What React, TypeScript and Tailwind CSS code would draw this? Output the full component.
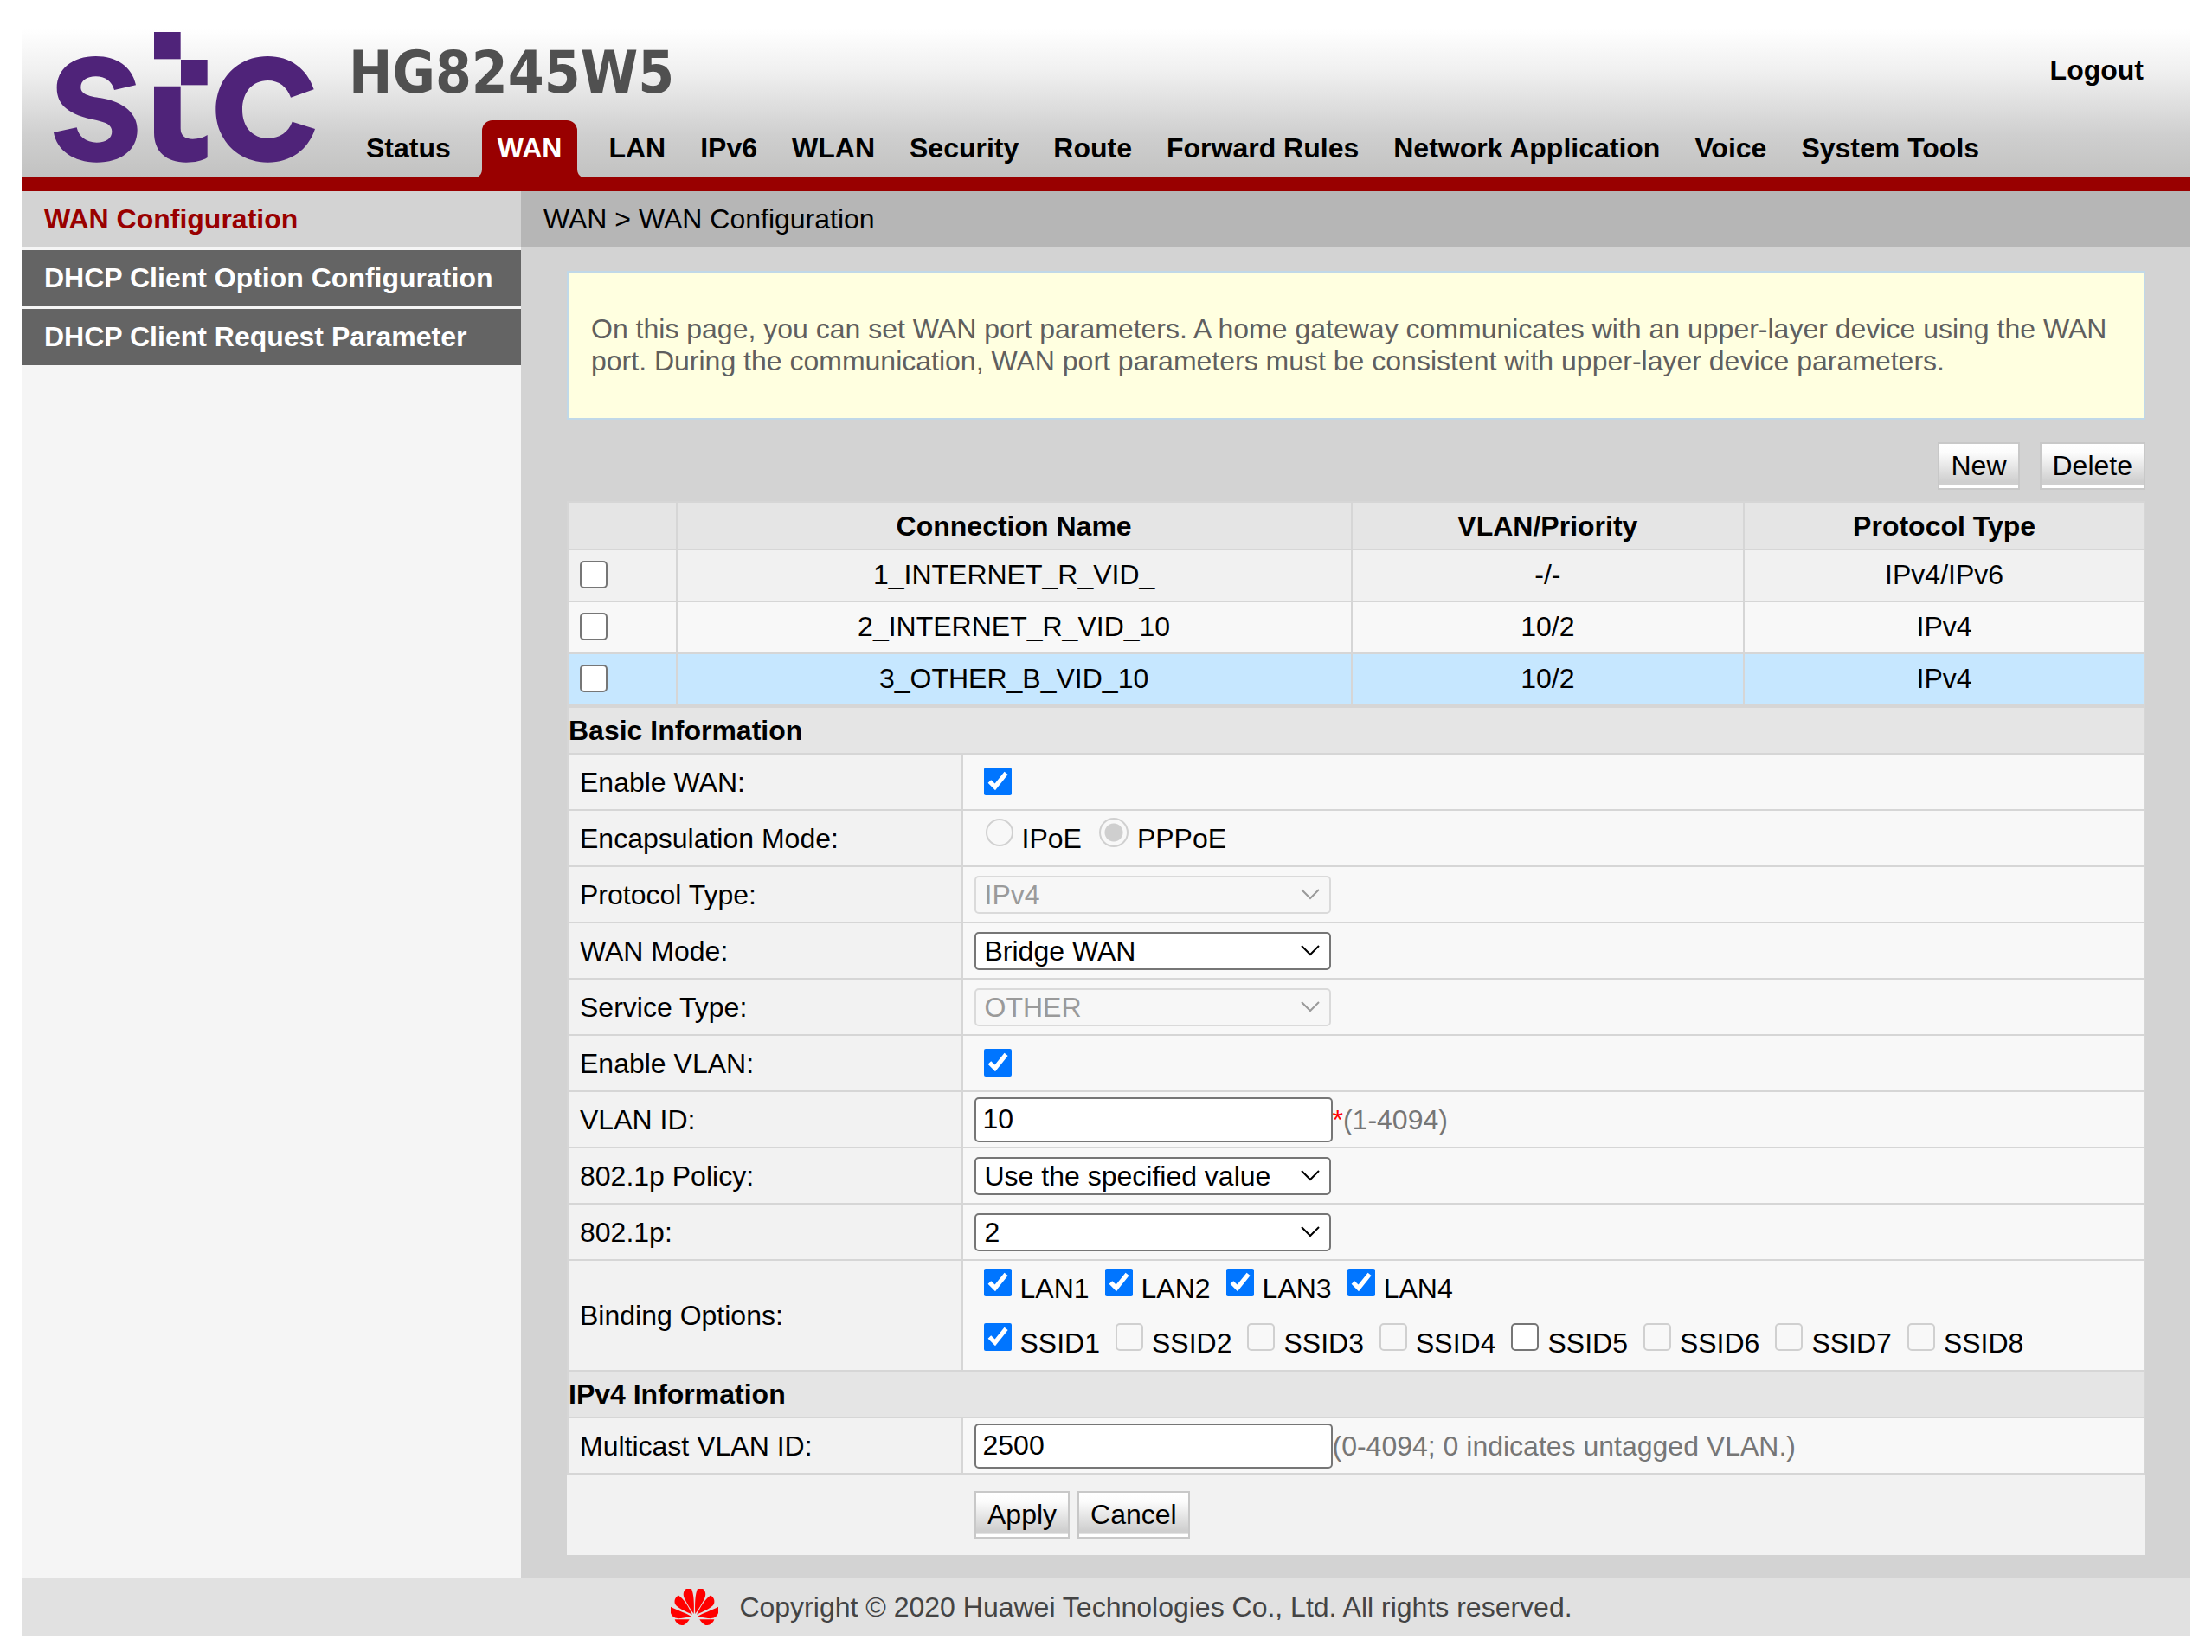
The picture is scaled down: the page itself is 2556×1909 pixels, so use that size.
import React from 'react';

const navItems = [
  'Status',
  'WAN',
  'LAN',
  'IPv6',
  'WLAN',
  'Security',
  'Route',
  'Forward Rules',
  'Network Application',
  'Voice',
  'System Tools'
];

const sideItems = ['WAN Configuration', 'DHCP Client Option Configuration', 'DHCP Client Request Parameter'];

const connections = [
  { name: '1_INTERNET_R_VID_', vlan: '-/-', protocol: 'IPv4/IPv6', color: 'bg-[#f1f1f1]' },
  { name: '2_INTERNET_R_VID_10', vlan: '10/2', protocol: 'IPv4', color: 'bg-[#f8f8f8]' },
  { name: '3_OTHER_B_VID_10', vlan: '10/2', protocol: 'IPv4', color: 'bg-[#c6e7ff]' }
];

const lanPorts = ['LAN1', 'LAN2', 'LAN3', 'LAN4'];

const ssids = [
  { name: 'SSID1', checked: true, disabled: false },
  { name: 'SSID2', checked: false, disabled: true },
  { name: 'SSID3', checked: false, disabled: true },
  { name: 'SSID4', checked: false, disabled: true },
  { name: 'SSID5', checked: false, disabled: false },
  { name: 'SSID6', checked: false, disabled: true },
  { name: 'SSID7', checked: false, disabled: true },
  { name: 'SSID8', checked: false, disabled: true }
];

// shared look of the tick boxes and radios; ticked boxes fall back to the native drawing
const checkboxStyle =
  'block size-8 appearance-none rounded-[5px] border-2 border-[#767676] bg-white checked:appearance-auto disabled:border-[#d0d0d0] disabled:bg-[#f8f8f8]';
const radioStyle =
  'mr-2.5 mb-3.5 appearance-none rounded-full border-2 border-[#d0d0d0] checked:bg-[radial-gradient(circle,#cfcfcf_10px,transparent_11px)]';

function StcLogo() {
  return (
    <svg width="302" height="151" viewBox="66 51 906 453" fill="#4f2379" role="img" aria-label="stc">
      <path d="M351 235L276 252C268 222 244 205 212 205C180 205 160 220 160 242C160 268 190 273 230 280C310 293 356 335 356 390C356 460 300 503 215 503C135 503 76 460 66 399L146 382C152 412 178 434 215 434C248 434 268 420 268 396C268 372 245 364 215 357C120 338 77 305 77 245C77 180 130 135 212 135C285 135 338 172 351 235Z" />
      <rect x="414" y="51" width="92" height="94" />
      <rect x="507" y="147" width="92" height="88" />
      <path d="M414 239H506V385C506 410 520 422 548 422C568 422 585 417 599 408V486C580 498 555 503 525 503C455 503 414 465 414 400Z" />
      <path d="M968 250L888 278C875 242 848 219 808 219C755 219 720 260 720 320C720 380 755 419 808 419C850 419 880 398 893 362L972 387C948 460 888 503 808 503C705 503 628 425 628 320C628 212 705 135 808 135C885 135 945 178 968 250Z" />
    </svg>
  );
}

function Petals() {
  return (
    <>
      <path d="M196 195C194 160 196 125 204 108H222C232 114 235 128 228 142C220 160 206 180 196 195Z" />
      <path d="M201 197C215 170 228 145 248 131C260 134 266 150 260 162C250 176 225 186 201 197Z" />
      <path d="M205 203C225 190 255 182 276 170V192C270 208 255 212 240 210C228 208 215 206 205 203Z" />
      <path d="M211 214H262C258 226 248 234 238 234H232C222 230 216 222 211 214Z" />
    </>
  );
}

function HuaweiLogo() {
  return (
    <svg width="55" height="42" viewBox="111 108 165 126" fill="#ff0000" role="img" aria-label="Huawei">
      <Petals />
      <g transform="translate(387 0) scale(-1 1)">
        <Petals />
      </g>
    </svg>
  );
}

function NavTab({ label }: { label: string }) {
  if (label !== 'WAN') {
    return (
      <a href="#" className="px-5 leading-[65px] whitespace-nowrap">
        {label}
      </a>
    );
  }
  return (
    <a href="#" aria-current="page" className="relative mx-4 h-[66px] rounded-t-[12px] bg-[#990000] px-[18px] leading-[65px] text-white">
      <svg className="absolute bottom-0 -left-[6px]" width="6" height="10" viewBox="0 0 6 10" fill="#990000">
        <path d="M6 0V10H0C4 8 6 5 6 0Z" />
      </svg>
      {label}
      <svg className="absolute -right-[6px] bottom-0" width="6" height="10" viewBox="0 0 6 10" fill="#990000">
        <path d="M0 0V10H6C2 8 0 5 0 0Z" />
      </svg>
    </a>
  );
}

function GradientButton({ children }: { children: React.ReactNode }) {
  return (
    <button
      type="button"
      className="flex h-[55px] justify-center border-2 border-[#c8c8c8] bg-[linear-gradient(to_bottom,#ffffff_0%,#fcfcfc_20%,#cfcfcf_85%,#cfcfcf_92%,#ffffff_95%)] px-[13px] leading-[50px]"
    >
      {children}
    </button>
  );
}

function Select({ id, value, disabled = false }: { id: string; value: string; disabled?: boolean }) {
  return (
    <div className="relative w-[412px]">
      <select
        id={id}
        disabled={disabled}
        className="block h-[44px] w-full appearance-none rounded-[5px] border-2 border-[#767676] bg-white px-2.5 leading-[38px] disabled:border-[#dadada] disabled:bg-[#f7f7f7] disabled:text-[#9a9a9a] disabled:opacity-100"
      >
        <option>{value}</option>
      </select>
      <svg
        className={disabled ? 'pointer-events-none absolute top-[15px] right-[13px] text-[#9a9a9a]' : 'pointer-events-none absolute top-[15px] right-[13px] text-black'}
        width="22"
        height="14"
        viewBox="0 0 22 14"
        fill="none"
        stroke="currentColor"
        strokeWidth="2"
      >
        <path d="M1 1L11 11L21 1" />
      </svg>
    </div>
  );
}

function TextInput({ id, value }: { id: string; value: string }) {
  return <input id={id} type="text" defaultValue={value} className="h-[52px] w-[414px] rounded-[5px] border-2 border-[#767676] bg-white px-2" />;
}

function EnableBox({ id }: { id: string }) {
  return (
    <div className="pb-0.5 pl-[11px]">
      <input id={id} type="checkbox" defaultChecked className={checkboxStyle} />
    </div>
  );
}

function BindingOption({ name, checked, disabled }: { name: string; checked: boolean; disabled: boolean }) {
  return (
    <label className="mr-[18px] flex items-center gap-2.5">
      <span className="pb-3.5">
        <input type="checkbox" defaultChecked={checked} disabled={disabled} className={checkboxStyle} />
      </span>
      {name}
    </label>
  );
}

function SectionRow({ title }: { title: string }) {
  return (
    <tr>
      <th colSpan={2} className="h-[54px] border-2 border-[#d6d6d6] bg-[#e5e5e5] text-left font-bold">
        {title}
      </th>
    </tr>
  );
}

function FormRow({ label, htmlFor, children }: { label: string; htmlFor?: string; children: React.ReactNode }) {
  return (
    <tr>
      <td className="h-[65px] w-1/4 border-2 border-[#d6d6d6] bg-[#f2f2f2] pl-[13px]">
        {htmlFor ? <label htmlFor={htmlFor}>{label}</label> : label}
      </td>
      <td className="border-2 border-[#d6d6d6] bg-[#f8f8f8] pl-[13px]">
        <div className="flex items-center">{children}</div>
      </td>
    </tr>
  );
}

export default function App() {
  return (
    <div className="bg-white px-[25px] pb-5 font-['Liberation_Sans',Arial,sans-serif] text-[32px] leading-9 text-black">
      <header className="flex border-b-16 border-[#990000] bg-[linear-gradient(to_bottom,#ffffff_16%,#f0f0f0_40%,#dcdcdc_62%,#cfcfcf_76%,#c2c2c1_100%)] pl-[37px] font-bold">
        <div className="w-[341px] shrink-0 pt-[37px]">
          <StcLogo />
        </div>
        <div className="flex-1">
          <div className="flex h-[139px] items-center justify-between pt-[22px] pr-[54px]">
            <h1 className="mt-1.5 font-['DejaVu_Sans_Condensed','DejaVu_Sans',sans-serif] text-[67px] leading-[72px] font-bold text-[#505050]">HG8245W5</h1>
            <a href="#">Logout</a>
          </div>
          <nav className="flex">
            {navItems.map((item) => (
              <NavTab key={item} label={item} />
            ))}
          </nav>
        </div>
      </header>

      <div className="flex">
        <aside className="w-[577px] shrink-0 bg-[#f5f5f5] font-bold">
          <nav className="flex flex-col gap-[3px]">
            {sideItems.map((item, index) => (
              <a
                key={item}
                href="#"
                className={index === 0 ? 'bg-[#d3d3d3] pl-[26px] leading-[65px] text-[#990000]' : 'bg-[#646464] pl-[26px] leading-[65px] text-white'}
              >
                {item}
              </a>
            ))}
          </nav>
        </aside>

        <main className="flex-1 bg-[#d3d3d3] pb-[27px]">
          <div className="bg-[#b6b6b6] pl-[26px] leading-[65px]">WAN &gt; WAN Configuration</div>

          <div className="mt-[27px] mr-[52px] ml-[53px]">
            <div className="border-2 border-[#c0d8e8] bg-[#ffffe0] px-[26px] py-[47px] leading-[37px] text-[#5f5f5f]">
              On this page, you can set WAN port parameters. A home gateway communicates with an upper-layer device using the WAN port. During the
              communication, WAN port parameters must be consistent with upper-layer device parameters.
            </div>

            <div className="flex justify-end gap-[23px] pt-[26px] pb-[13px]">
              <GradientButton>New</GradientButton>
              <GradientButton>Delete</GradientButton>
            </div>

            <table className="w-full table-fixed border-collapse text-center">
              <thead>
                <tr className="h-[55px] bg-[#e5e5e5]">
                  <th className="w-[6.9%] border-2 border-[#d6d6d6]"></th>
                  <th className="w-[42.8%] border-2 border-[#d6d6d6]">Connection Name</th>
                  <th className="w-[24.9%] border-2 border-[#d6d6d6]">VLAN/Priority</th>
                  <th className="w-[25.4%] border-2 border-[#d6d6d6]">Protocol Type</th>
                </tr>
              </thead>
              <tbody>
                {connections.map((row) => (
                  <tr key={row.name} className={row.color}>
                    <td className="h-[60px] border-2 border-[#d6d6d6] pb-0.5 pl-[13px]">
                      <input type="checkbox" aria-label={row.name} className={checkboxStyle} />
                    </td>
                    <td className="border-2 border-[#d6d6d6] pb-0.5">{row.name}</td>
                    <td className="border-2 border-[#d6d6d6] pb-0.5">{row.vlan}</td>
                    <td className="border-2 border-[#d6d6d6] pb-0.5">{row.protocol}</td>
                  </tr>
                ))}
              </tbody>
            </table>

            <form>
              <table className="w-full border-collapse">
                <tbody>
                  <SectionRow title="Basic Information" />
                  <FormRow label="Enable WAN:" htmlFor="enable-wan">
                    <EnableBox id="enable-wan" />
                  </FormRow>
                  <FormRow label="Encapsulation Mode:">
                    <label className="flex h-[60px] items-center pl-[13px]">
                      <input type="radio" name="encapsulation" disabled className={`${radioStyle} size-8`} />
                      IPoE
                    </label>
                    <label className="flex h-[60px] items-center pl-5">
                      <input type="radio" name="encapsulation" defaultChecked disabled className={`${radioStyle} size-[34px]`} />
                      PPPoE
                    </label>
                  </FormRow>
                  <FormRow label="Protocol Type:" htmlFor="protocol-type">
                    <Select id="protocol-type" value="IPv4" disabled />
                  </FormRow>
                  <FormRow label="WAN Mode:" htmlFor="wan-mode">
                    <Select id="wan-mode" value="Bridge WAN" />
                  </FormRow>
                  <FormRow label="Service Type:" htmlFor="service-type">
                    <Select id="service-type" value="OTHER" disabled />
                  </FormRow>
                  <FormRow label="Enable VLAN:" htmlFor="enable-vlan">
                    <EnableBox id="enable-vlan" />
                  </FormRow>
                  <FormRow label="VLAN ID:" htmlFor="vlan-id">
                    <TextInput id="vlan-id" value="10" />
                    <span className="text-[#ff0000]">*</span>
                    <span className="text-[#767676]">(1-4094)</span>
                  </FormRow>
                  <FormRow label="802.1p Policy:" htmlFor="policy">
                    <Select id="policy" value="Use the specified value" />
                  </FormRow>
                  <FormRow label="802.1p:" htmlFor="priority">
                    <Select id="priority" value="2" />
                  </FormRow>
                  <FormRow label="Binding Options:">
                    <div className="pl-[11px]">
                      <div className="flex h-[63px] items-center">
                        {lanPorts.map((port) => (
                          <BindingOption key={port} name={port} checked disabled={false} />
                        ))}
                      </div>
                      <div className="flex h-[63px] items-center">
                        {ssids.map((ssid) => (
                          <BindingOption key={ssid.name} name={ssid.name} checked={ssid.checked} disabled={ssid.disabled} />
                        ))}
                      </div>
                    </div>
                  </FormRow>
                  <SectionRow title="IPv4 Information" />
                  <FormRow label="Multicast VLAN ID:" htmlFor="multicast-vlan">
                    <TextInput id="multicast-vlan" value="2500" />
                    <span className="text-[#767676]">(0-4094; 0 indicates untagged VLAN.)</span>
                  </FormRow>
                </tbody>
              </table>
              <div className="flex bg-[#f2f2f2] py-[19px]">
                <div className="w-1/4"></div>
                <div className="flex gap-[9px] pl-[15px]">
                  <GradientButton>Apply</GradientButton>
                  <GradientButton>Cancel</GradientButton>
                </div>
              </div>
            </form>
          </div>
        </main>
      </div>

      <footer className="flex h-[66px] items-center justify-center gap-6 bg-[#e1e1e1] pl-9 text-[#444444]">
        <HuaweiLogo />
        <span>Copyright © 2020 Huawei Technologies Co., Ltd. All rights reserved.</span>
      </footer>
    </div>
  );
}
